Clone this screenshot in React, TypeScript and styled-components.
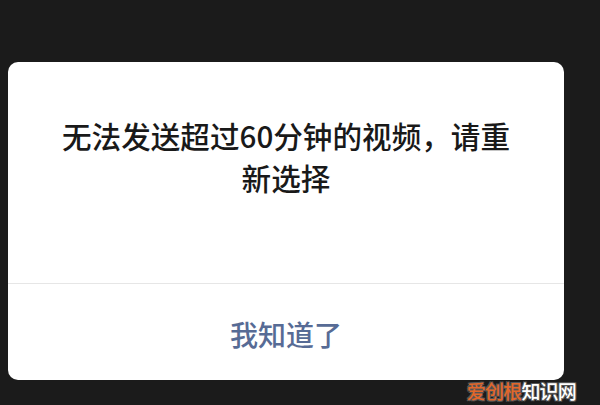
import React from "react";
import styled, { createGlobalStyle } from "styled-components";

const Global = createGlobalStyle`
  html, body { margin: 0; padding: 0; background: #1b1b1b; }
  body { width: 600px; height: 405px; overflow: hidden; font-family: "Noto Sans CJK SC", "Noto Sans", sans-serif; }
`;

const Screen = styled.div`
  position: relative;
  width: 600px;
  height: 405px;
  background: #1b1b1b;
  padding: 62px 36px 0 8px;
  box-sizing: border-box;
`;

const Dialog = styled.div`
  width: 556px;
  height: 318px;
  background: #ffffff;
  border-radius: 10px;
  display: flex;
  flex-direction: column;
  overflow: hidden;
`;

const Body = styled.div`
  flex: 1;
  display: flex;
  justify-content: center;
  padding: 53px 44px 0;
  border-bottom: 1px solid #e6e6e6;
`;

const Message = styled.p`
  margin: 0;
  font-size: 29.6px;
  line-height: 42px;
  color: #191919;
  text-align: center;
  font-weight: 500;
`;

const Button = styled.div`
  height: 96px;
  display: flex;
  align-items: center;
  justify-content: center;
  padding-top: 4px;
  box-sizing: border-box;
  font-size: 28px;
  font-weight: 500;
  color: #576b95;
`;

const Watermark = styled.div`
  position: absolute;
  right: 24px;
  bottom: 3px;
  font-size: 19px;
  font-weight: 500;
  line-height: 22px;
  letter-spacing: -0.8px;
  text-shadow: -1px -1px 0 #555, 1px -1px 0 #555, -1px 1px 0 #555, 1px 1px 0 #555;
`;

const Mark = styled.span<{ $orange?: boolean }>`
  color: ${(p) => (p.$orange ? "#e2672a" : "#ffffff")};
`;

export default function App() {
  return (
    <>
      <Global />
      <Screen>
        <Dialog>
          <Body>
            <Message>无法发送超过60分钟的视频，请重新选择</Message>
          </Body>
          <Button>我知道了</Button>
        </Dialog>
        <Watermark>
          <Mark $orange>爱创根</Mark>
          <Mark>知识网</Mark>
        </Watermark>
      </Screen>
    </>
  );
}
